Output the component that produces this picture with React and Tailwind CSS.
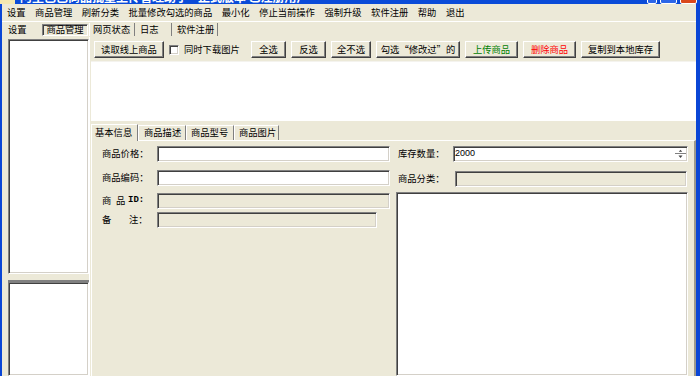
import React from "react";

const raised =
  "border border-t-white border-l-white border-b-[#404040] border-r-[#404040] shadow-[inset_-1px_-1px_0_#808080] bg-[#ECE9D8]";
const sunken =
  "border border-t-[#808080] border-l-[#808080] border-b-white border-r-white shadow-[inset_1px_1px_0_#404040,inset_-1px_-1px_0_#D4D0C8]";

const menus = ["设置", "商品管理", "刷新分类", "批量修改勾选的商品", "最小化", "停止当前操作", "强制升级", "软件注册", "帮助", "退出"];

const tools = [
  { label: "全选", w: "w-[35px]" },
  { label: "反选", w: "w-[35px]" },
  { label: "全不选", w: "w-[40px]" },
  { label: "勾选“修改过”的", w: "w-[84px]" },
  { label: "上传商品", w: "w-[53px]", color: "text-[#008000]" },
  { label: "删除商品", w: "w-[53px]", color: "text-[#FF0000]" },
  { label: "复制到本地库存", w: "w-[79px]" },
];

const Btn = ({ label, w, color = "text-black" }) => (
  <div className={`${raised} ${w} h-[17px] flex items-center justify-center ${color} leading-none shrink-0`}>
    {label}
  </div>
);

const Field = ({ disabled, className = "", children }) => (
  <div className={`${sunken} ${disabled ? "bg-[#ECE9D8]" : "bg-white"} h-[16px] ${className}`}>{children}</div>
);

export default function App() {
  return (
    <div className="w-[700px] h-[376px] overflow-hidden bg-[#ECE9D8] flex flex-col font-['Noto_Sans_CJK_SC',sans-serif] text-[9.3px] text-black">
      {/* title bar, mostly off screen */}
      <div className="h-[4px] shrink-0 bg-[#0A4BD8] overflow-hidden flex">
        <div className="w-[15px] -mt-[10px] h-[14px] bg-[#F4E8B0]" />
        <div className="-mt-[11px] ml-[5px] h-[15px] text-white font-bold text-[12px] leading-[15px] whitespace-nowrap">
          阿里巴巴商品批量上传管理助手 - 正式版本 已注册用户
        </div>
        <div className="ml-auto flex gap-[3px] pr-[3px]">
          <div className="w-[10px] -mt-[10px] h-[14px] bg-[#2C66E8] border border-white rounded-[2px] ml-[0px]" />
          <div className="w-[17px] -mt-[10px] h-[14px] bg-[#2C66E8] border border-white rounded-[2px]" />
          <div className="w-[17px] -mt-[10px] h-[14px] bg-[#D9481C] border border-white rounded-[2px]" />
        </div>
      </div>

      <div className="flex-1 flex flex-col border-l-2 border-r-4 border-[#0A46D6] min-h-0">
        {/* menu bar */}
        <div className="h-[18px] shrink-0 flex items-center gap-[9.5px] pl-[5px] border-b border-white leading-none">
          {menus.map((m) => (
            <span key={m}>{m}</span>
          ))}
        </div>

        {/* outer tabs */}
        <div className="h-[15px] shrink-0 flex items-center pl-[2px] leading-none">
          <div className="w-[38px] pl-[4px]">设置</div>
          <div className="w-[46px] h-[12px] flex items-center justify-center border border-t-[#808080] border-l-[#808080] border-b-white border-r-white shadow-[inset_1px_1px_0_#404040]">
            商品管理
          </div>
          <div className="w-[1px] h-[13px] bg-[#808080] ml-[1px] border-r border-white" />
          <div className="w-[44px] pl-[3px]">网页状态</div>
          <div className="w-[1px] h-[13px] bg-[#808080]" />
          <div className="w-[36px] pl-[5px]">日志</div>
          <div className="w-[1px] h-[13px] bg-[#808080]" />
          <div className="w-[45px] pl-[5px]">软件注册</div>
          <div className="w-[1px] h-[13px] bg-[#808080]" />
        </div>

        {/* content */}
        <div className="flex-1 flex min-h-0">
          {/* left lists */}
          <div className="w-[88px] shrink-0 pl-[6px] pt-[2px] flex flex-col border-r border-white">
            <div className={`${sunken} bg-white h-[235px] shrink-0`} />
            <div className="h-[8px] shrink-0 border-b-2 border-[#808080]" />
            <div className={`${sunken} bg-white flex-1`} />
          </div>

          {/* right side */}
          <div className="flex-1 flex flex-col ml-[1px]">
            <div className="h-[24px] shrink-0 flex items-center pl-[3px] gap-[5px] pt-[1px]">
              <Btn label="读取线上商品" w="w-[70px]" />
              <div className={`${sunken} bg-white w-[10px] h-[10px] shrink-0`} />
              <span className="w-[60px] leading-none">同时下载图片</span>
              <div className="flex gap-[5px] ml-[2px]">
                {tools.map((t) => (
                  <Btn key={t.label} {...t} />
                ))}
              </div>
            </div>

            <div className="h-[60px] shrink-0 bg-white border-t border-[#F4F3EE]" />

            {/* inner tabs */}
            <div className="h-[19px] shrink-0 flex items-end leading-none">
              <div className="w-[47px] h-[17px] flex items-center pl-[3px] border-t border-l border-white border-r border-r-[#808080] bg-[#ECE9D8] relative top-[1px]">
                基本信息
              </div>
              <div className="w-[48px] h-[15px] flex items-center pl-[5px] border-t border-l border-white border-r border-r-[#808080]">
                商品描述
              </div>
              <div className="w-[48px] h-[15px] flex items-center pl-[4px] border-t border-l border-white border-r border-r-[#808080]">
                商品型号
              </div>
              <div className="w-[45px] h-[15px] flex items-center pl-[4px] border-t border-l border-white border-r border-r-[#808080]">
                商品图片
              </div>
            </div>

            {/* panel */}
            <div className="flex-1 border-t border-l border-white border-r-2 border-r-[#9D9A8E] flex pl-[10px] pt-[5px] min-h-0">
              <div className="w-[234px] shrink-0 flex flex-col hidden" />
              <div className="w-[288px] shrink-0 flex flex-col">
                <div className="flex items-center h-[16px]">
                  <span className="w-[55px] shrink-0 leading-none">商品价格：</span>
                  <Field className="flex-1" />
                </div>
                <div className="flex items-center h-[16px] mt-[8px]">
                  <span className="w-[55px] shrink-0 leading-none">商品编码：</span>
                  <Field className="flex-1" />
                </div>
                <div className="flex items-center h-[16px] mt-[7px]">
                  <span className="w-[55px] shrink-0 leading-none flex">
                    <span className="w-[14px]">商</span>
                    <span className="w-[12px]">品</span>
                    <span className="font-['Liberation_Mono',monospace] font-bold text-[9px]">ID:</span>
                  </span>
                  <Field disabled className="flex-1" />
                </div>
                <div className="flex items-center h-[16px] mt-[3px]">
                  <span className="w-[55px] shrink-0 leading-none flex">
                    <span className="w-[27px]">备</span>
                    <span>注：</span>
                  </span>
                  <Field disabled className="w-[220px]" />
                </div>
              </div>

              <div className="flex-1 flex flex-col ml-[6px] mr-[6px]">
                <div className="flex items-center h-[16px] pl-[2px]">
                  <span className="w-[55px] shrink-0 leading-none">库存数量：</span>
                  <Field className="flex-1 flex items-center pl-[1px] font-['Liberation_Sans',sans-serif] text-[9px]">
                    <span className="flex-1">2000</span>
                    <div className="w-[11px] h-[12px] mr-[1px] flex flex-col">
                      <svg viewBox="0 0 11 6" className="w-[11px] h-[6px] border-b border-[#808080]">
                        <path d="M3.5 4.5 L5.5 2 L7.5 4.5 Z" fill="#404040" />
                      </svg>
                      <svg viewBox="0 0 11 6" className="w-[11px] h-[6px]">
                        <path d="M3.5 1.5 L5.5 4 L7.5 1.5 Z" fill="#404040" />
                      </svg>
                    </div>
                  </Field>
                </div>
                <div className="flex items-center h-[16px] mt-[9px] pl-[2px]">
                  <span className="w-[57px] shrink-0 leading-none">商品分类：</span>
                  <Field disabled className="flex-1 mr-[1px]" />
                </div>
                <div className={`${sunken} bg-white flex-1 mt-[5px]`} />
              </div>
            </div>
          </div>
        </div>
      </div>
    </div>
  );
}
